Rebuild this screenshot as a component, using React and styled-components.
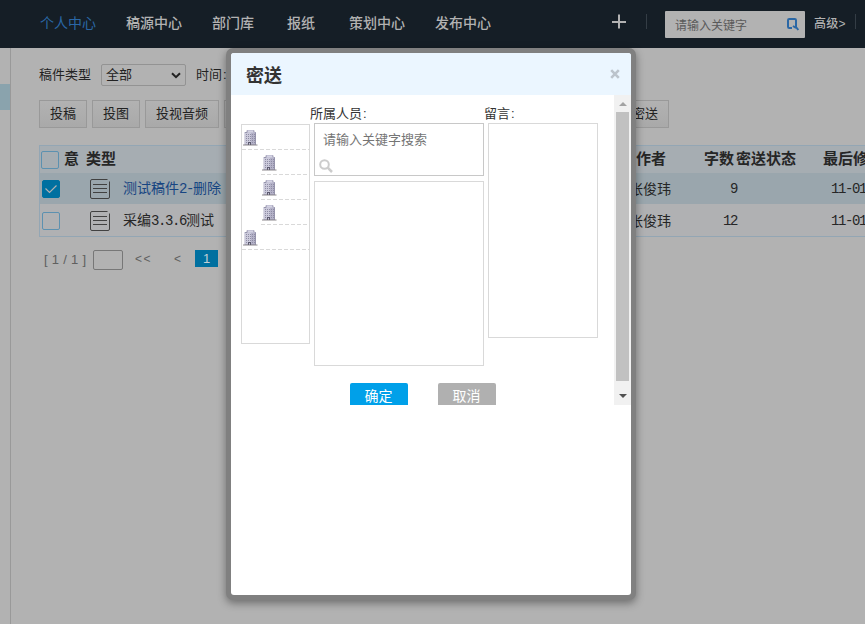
import React from "react";
import styled, { createGlobalStyle } from "styled-components";

const Global = createGlobalStyle`
  * { box-sizing: border-box; }
  body { margin: 0; font-family: "Liberation Sans", "Noto Sans CJK SC", sans-serif; }
`;

const Page = styled.div`
  position: relative;
  width: 865px;
  height: 624px;
  overflow: hidden;
  background: #b2b2b2;
  color: #222;
  font-size: 13px;
  white-space: nowrap;
`;

const TopBar = styled.header`
  display: flex;
  align-items: center;
  height: 48px;
  padding-left: 40px;
  background: #151e26;
  color: #b2b2b2;
`;

const Nav = styled.nav`
  display: grid;
  grid-template-columns: 86px 86px 75px 62px 86px 86px;
  width: 571px;
  padding-bottom: 3px;
  font-size: 14px;
  line-height: 20px;
`;

const NavItem = styled.span`
  color: ${(p) => (p.$active ? "#2a67a5" : "#b2b2b2")};
  font-weight: ${(p) => (p.$active ? 400 : 500)};
`;

const Divider = styled.i`
  width: 1px;
  height: 15px;
  margin: 0 0 5px ${(p) => p.$gap}px;
  background: #343d45;
`;

const SearchBox = styled.div`
  display: flex;
  align-items: center;
  justify-content: space-between;
  width: 140px;
  height: 27px;
  margin-left: 18px;
  padding: 0 6px 0 10px;
  background: #b2b2b2;
  border-radius: 1px;
  color: #5a5a5a;
  font-size: 12px;
`;

const Advanced = styled.span`
  width: 32px;
  margin: 0 0 3px 9px;
  font-size: 12px;
  font-weight: 500;
  letter-spacing: 0.3px;
`;

const Main = styled.div`
  display: flex;
  height: 576px;
`;

const Side = styled.aside`
  width: 11px;
  padding-top: 36px;
  border-right: 1px solid #999;
`;

const SideMark = styled.div`
  height: 26px;
  background: #8aa3ad;
`;

const Content = styled.main`
  width: 854px;
  padding: 16px 0 0 28px;
  overflow: hidden;
`;

const Filters = styled.div`
  display: flex;
  align-items: center;
  height: 22px;
  line-height: 20px;
`;

const Colon = styled.span`
  padding-left: 1px;
`;

const Select = styled.div`
  display: flex;
  align-items: center;
  justify-content: space-between;
  width: 85px;
  height: 22px;
  margin: 0 10px;
  padding: 0 4px;
  border: 1px solid #939393;
  border-radius: 2px;
`;

const Buttons = styled.div`
  display: flex;
  gap: 5px;
  margin-top: 14px;
`;

const Tool = styled.div`
  width: ${(p) => p.$w}px;
  height: 28px;
  border: 1px solid #999;
  background: linear-gradient(#b2b2b2, #a9a9a9);
  text-align: center;
  line-height: 26px;
`;

const Table = styled.section`
  width: 900px;
  margin-top: 17px;
  border: 1px solid #93a6b4;
`;

const Row = styled.div`
  display: grid;
  align-items: center;
  grid-template-columns: 26px 24px 33px 506px 50px 58px 194px;
  height: ${(p) => p.$h}px;
  padding-top: ${(p) => p.$drop || 0}px;
  background: ${(p) => p.$bg};
  color: #262626;
  font-size: 14px;
  line-height: 20px;
`;

const HeadRow = styled(Row)`
  grid-template-columns: 24px 22px 550px 68px 32px 87px 100px;
  font-size: 15px;
  font-weight: 600;
`;

const HeadText = styled.span`
  margin-top: -2px;
`;

const Title = styled.span`
  color: ${(p) => (p.$link ? "#174582" : "#262626")};
`;

const Mono = styled.span`
  font-family: "Liberation Mono", monospace;
  font-size: 14px;
  letter-spacing: -1.4px;
`;

const Count = styled(Mono)`
  text-align: right;
`;

const DateCell = styled(Mono)`
  padding-left: 94px;
`;

const Check = styled.i`
  display: flex;
  align-items: center;
  justify-content: center;
  width: 18px;
  height: 18px;
  margin-left: ${(p) => p.$ml}px;
  border: 1px solid ${(p) => (p.$on ? "#0070a0" : "#5c91b0")};
  border-radius: 2px;
  background: ${(p) => (p.$on ? "#0070a0" : "transparent")};
`;

const Pager = styled.div`
  display: flex;
  align-items: center;
  height: 20px;
  margin: 13px 0 0 5px;
  color: #606060;
`;

const PageInfo = styled.span`
  width: 49px;
  margin-top: -2px;
  letter-spacing: 0.3px;
`;

const PageInput = styled.i`
  width: 30px;
  height: 20px;
  margin-right: 12px;
  border: 1px solid #777;
  border-radius: 2px;
`;

const Arrow = styled.span`
  width: ${(p) => p.$w}px;
  margin-top: -2px;
  font-size: 12px;
  letter-spacing: 1.5px;
`;

const Current = styled.span`
  width: 23px;
  height: 17px;
  margin-bottom: 3px;
  background: #0070a0;
  color: #c4d0d6;
  text-align: center;
  line-height: 17px;
`;

const Dialog = styled.div`
  position: absolute;
  left: 226px;
  top: 48px;
  width: 410px;
  height: 552px;
  border: 5px solid #808080;
  border-radius: 7px;
  background: #808080;
  box-shadow: 0 3px 9px rgba(0, 0, 0, 0.4);
`;

const Sheet = styled.div`
  height: 100%;
  overflow: hidden;
  border-radius: 3px;
  background: #fff;
`;

const DialogHead = styled.div`
  display: flex;
  align-items: center;
  justify-content: space-between;
  height: 42px;
  padding: 0 11px 0 15px;
  background: #ebf6ff;
  color: #333;
  font-size: 18px;
  font-weight: 700;
`;

const DialogTitle = styled.span`
  padding-bottom: 1px;
`;

const Frame = styled.div`
  display: flex;
  height: 310px;
  overflow: hidden;
`;

const FrameBody = styled.div`
  width: 383px;
  padding: 9px 0 0 10px;
  color: #333;
`;

const Columns = styled.div`
  display: flex;
  align-items: flex-start;
  height: 279px;
`;

const Tree = styled.div`
  width: 69px;
  height: 220px;
  margin-top: 20px;
  border: 1px solid #d9d9d9;
`;

const Node = styled.div`
  height: 25px;
  margin-left: ${(p) => (p.$child ? 19 : 0)}px;
  padding: 4px 0 0 1px;
  background: repeating-linear-gradient(90deg, #d9d9d9 0 4px, transparent 4px 6px) bottom / 100% 1px no-repeat;
  line-height: 0;
`;

const People = styled.div`
  width: 174px;
`;

const Label = styled.div`
  height: 19px;
  line-height: 19px;
`;

const FindBox = styled.div`
  width: 170px;
  height: 53px;
  margin-left: 4px;
  padding: 6px 0 0 4px;
  border: 1px solid #c8c8c8;
  color: #757575;
  line-height: 20px;
`;

const FindText = styled.div`
  padding-left: 4px;
  height: 29px;
`;

const FindIcon = styled.div`
  line-height: 0;
`;

const ListBox = styled.div`
  width: 170px;
  height: 185px;
  margin: 5px 0 0 4px;
  border: 1px solid #d9d9d9;
`;

const Message = styled.div`
  width: 114px;
`;

const MessageBox = styled.div`
  width: 110px;
  height: 215px;
  margin-left: 4px;
  border: 1px solid #d9d9d9;
`;

const Actions = styled.div`
  display: flex;
  gap: 30px;
  padding-left: 109px;
`;

const Action = styled.div`
  width: 58px;
  height: 27px;
  padding-right: 1px;
  border-radius: 2px;
  background: ${(p) => (p.$primary ? "#00a0e9" : "#b0b0b0")};
  color: #fff;
  font-size: 14px;
  line-height: 26px;
  text-align: center;
`;

const ScrollBar = styled.div`
  display: flex;
  flex-direction: column;
  align-items: center;
  width: 17px;
  background: #f1f1f1;
`;

const ScrollEnd = styled.div`
  display: flex;
  flex-shrink: 0;
  align-items: center;
  justify-content: center;
  height: ${(p) => p.$h}px;
  padding-top: ${(p) => p.$drop || 0}px;
`;

const Thumb = styled.div`
  flex-shrink: 0;
  width: 13px;
  height: 269px;
  background: #c1c1c1;
`;

const PlusSlot = styled.div`
  height: 15px;
  margin-bottom: 5px;
  line-height: 0;
`;

const Plus = () => (
  <svg width="15" height="15" viewBox="0 0 15 15">
    <path d="M8 0.5v14M1 8h14" stroke="#b2b2b2" strokeWidth="2" fill="none" />
  </svg>
);

const SearchMark = () => (
  <svg width="13" height="14" viewBox="0 0 13 14">
    <path d="M6 11H3.2Q2 11 2 9.8V3.2Q2 2 3.2 2H8.8Q10 2 10 3.2V10L12.3 13M7 9L10 11" stroke="#2a67a5" strokeWidth="2" fill="none" />
  </svg>
);

const Chevron = () => (
  <svg width="10" height="7" viewBox="0 0 10 7">
    <path d="M1 1.2L5 5.2L9 1.2" stroke="#222" strokeWidth="2" fill="none" />
  </svg>
);

const Tick = () => (
  <svg width="14" height="12" viewBox="0 0 14 12">
    <path d="M1.5 5.5L5.5 9.5L12.5 2.5" stroke="#b2b2b2" strokeWidth="1.2" fill="none" />
  </svg>
);

const DocIcon = () => (
  <svg width="20" height="20" viewBox="0 0 20 20" fill="none" stroke="#414141">
    <path d="M17.5 .5H2Q.5 .5 .5 2V18Q.5 19.5 2 19.5H18Q19.5 19.5 19.5 18V2.5" />
    <path d="M3 5.5H17M3 9.5H17M3 13.5H17" />
  </svg>
);

const Building = () => (
  <svg width="15" height="17" viewBox="0 0 15 17">
    <path d="M4 1H11V3H13V16H1.5V3H4Z" fill="#b4b2c8" />
    <path d="M4.5 1.5H10.5V3.5H4.5Z" fill="#d4d3e3" />
    <path d="M2 3.5H8V15.5H2Z" fill="#cbcadb" />
    <path d="M3 5.5H12M3 7.5H12M3 9.5H12M3 11.5H12M3 13.5H12" stroke="#8f8da5" strokeDasharray="1 1" />
    <path d="M12.5 3.5V15.5M4 1.5V3.5H2M11 1.5V3" stroke="#8d8ba3" strokeWidth=".8" fill="none" />
    <path d="M5 13H8V16H5Z" fill="#5d5b70" />
    <path d="M6 14H7V16H6Z" fill="#c7c6d8" />
    <path d="M0 16H14.5" stroke="#6f6970" strokeWidth=".8" />
  </svg>
);

const Lens = () => (
  <svg width="14" height="14" viewBox="0 0 14 14" fill="none" stroke="#ccc">
    <circle cx="5.5" cy="5.5" r="4.3" strokeWidth="2" />
    <path d="M8.7 8.7L13 13" strokeWidth="2.5" />
  </svg>
);

const CloseMark = () => (
  <svg width="10" height="10" viewBox="0 0 10 10">
    <path d="M1.2 1.2L8.8 8.8M8.8 1.2L1.2 8.8" stroke="#bcc4cc" strokeWidth="2.6" />
  </svg>
);

const Caret = ({ down }) => (
  <svg width="8" height="4" viewBox="0 0 8 4">
    <path d={down ? "M0 0H8L4 4Z" : "M0 4H8L4 0Z"} fill={down ? "#505050" : "#a3a3a3"} />
  </svg>
);

const navItems = ["个人中心", "稿源中心", "部门库", "报纸", "策划中心", "发布中心"];
const treeNodes = [false, true, true, true, false];

export default function App() {
  return (
    <Page>
      <Global />
      <TopBar>
        <Nav>
          {navItems.map((n, i) => (
            <NavItem key={n} $active={i === 0}>{n}</NavItem>
          ))}
        </Nav>
        <PlusSlot><Plus /></PlusSlot>
        <Divider $gap={20} />
        <SearchBox>请输入关键字<SearchMark /></SearchBox>
        <Advanced>高级&gt;</Advanced>
        <Divider $gap={9} />
      </TopBar>
      <Main>
        <Side><SideMark /></Side>
        <Content>
          <Filters>
            稿件类型
            <Select>全部<Chevron /></Select>
            时间<Colon>:</Colon>
          </Filters>
          <Buttons>
            <Tool $w={48}>投稿</Tool>
            <Tool $w={48}>投图</Tool>
            <Tool $w={74}>投视音频</Tool>
            <Tool $w={392} />
            <Tool $w={48}>密送</Tool>
          </Buttons>
          <Table>
            <HeadRow $h={27} $bg="#a6adb2" $drop={1}>
              <Check $ml={1} />
              {["意", "类型", "作者", "字数", "密送状态", "最后修"].map((h) => (
                <HeadText key={h}>{h}</HeadText>
              ))}
            </HeadRow>
            <Row $h={31} $bg="#9aa6ad">
              <Check $ml={2} $on><Tick /></Check><span />
              <DocIcon />
              <Title $link>测试稿件<Mono>2-</Mono>删除</Title>
              <span>张俊玮</span>
              <Count>9</Count>
              <DateCell>11-01</DateCell>
            </Row>
            <Row $h={32} $bg="#b0b1b3" $drop={1}>
              <Check $ml={2} /><span />
              <DocIcon />
              <Title>采编<Mono>3.3.6</Mono>测试</Title>
              <span>张俊玮</span>
              <Count>12</Count>
              <DateCell>11-01</DateCell>
            </Row>
          </Table>
          <Pager>
            <PageInfo>[ 1 / 1 ]</PageInfo>
            <PageInput />
            <Arrow $w={39}>&lt;&lt;</Arrow>
            <Arrow $w={21}>&lt;</Arrow>
            <Current>1</Current>
          </Pager>
        </Content>
      </Main>
      <Dialog>
        <Sheet>
          <DialogHead><DialogTitle>密送</DialogTitle><CloseMark /></DialogHead>
          <Frame>
            <FrameBody>
              <Columns>
                <Tree>
                  {treeNodes.map((child, i) => (
                    <Node key={i} $child={child}><Building /></Node>
                  ))}
                </Tree>
                <People>
                  <Label>所属人员<Colon>:</Colon></Label>
                  <FindBox>
                    <FindText>请输入关键字搜索</FindText>
                    <FindIcon><Lens /></FindIcon>
                  </FindBox>
                  <ListBox />
                </People>
                <Message>
                  <Label>留言<Colon>:</Colon></Label>
                  <MessageBox />
                </Message>
              </Columns>
              <Actions>
                <Action $primary>确定</Action>
                <Action>取消</Action>
              </Actions>
            </FrameBody>
            <ScrollBar>
              <ScrollEnd $h={17}><Caret /></ScrollEnd>
              <Thumb />
              <ScrollEnd $h={24} $drop={6}><Caret down /></ScrollEnd>
            </ScrollBar>
          </Frame>
        </Sheet>
      </Dialog>
    </Page>
  );
}
